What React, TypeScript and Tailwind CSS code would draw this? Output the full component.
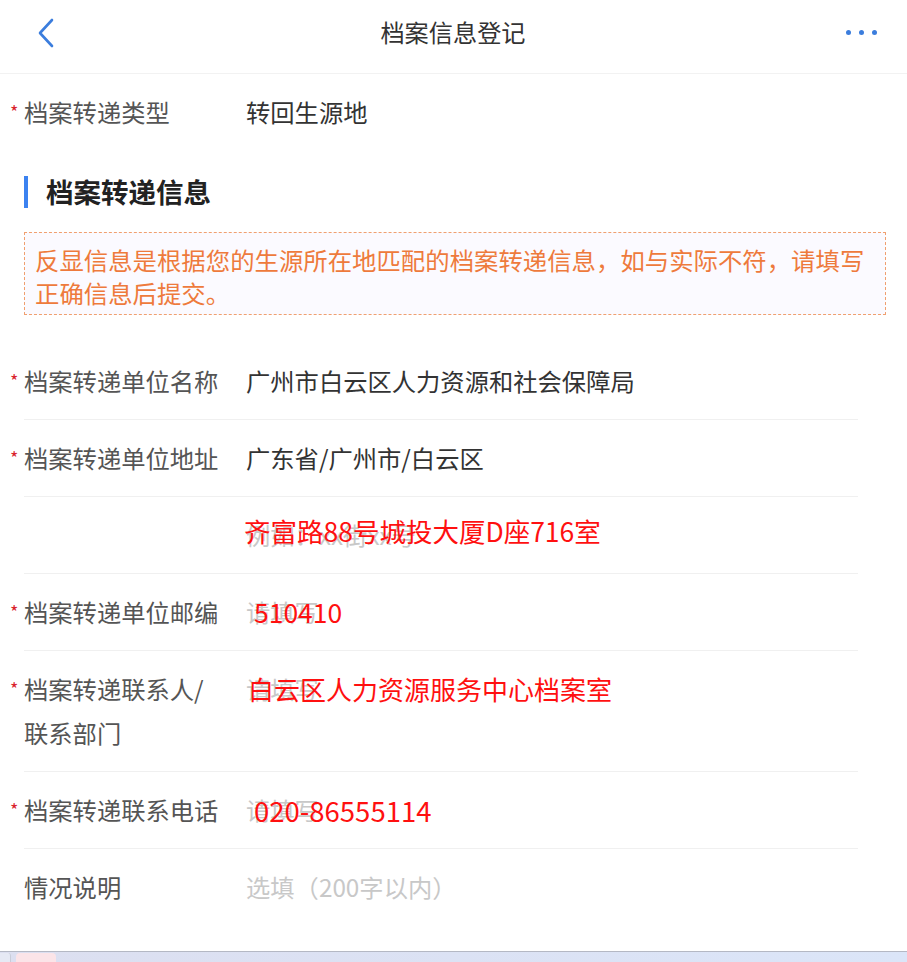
import React from "react";

const font = { fontFamily: '"Noto Sans CJK SC", "Noto Sans", sans-serif' };

type RowProps = {
  label: React.ReactNode;
  required?: boolean;
  value?: React.ReactNode;
  placeholder?: string;
  red?: string;
  redOffset?: string;
  border?: boolean;
  redSize?: string;
};

function Row({ label, required, value, placeholder, red, redOffset = "ml-0", border = true, redSize = "text-[26.5px]" }: RowProps) {
  return (
    <div className={`mx-[24px] w-[834px] py-[16px] ${border ? "border-b border-[#f0f0f0]" : ""}`}>
      <div className="flex -ml-[14px]">
        <div className="w-[14px] shrink-0 pt-[6px] text-[18px] leading-[30px] text-[#d9232d]">{required ? "*" : ""}</div>
        <div className="w-[222px] shrink-0 text-[24.3px] leading-[44px] text-[#555555]">{label}</div>
        <div className="relative flex-1 text-[24.3px] leading-[44px]">
          {value !== undefined && <span className="text-[#333333]">{value}</span>}
          {placeholder && <span className="text-[#c8c8c8]">{placeholder}</span>}
          {red && (
            <span className={`absolute left-0 top-0 ${redOffset} ${redSize} leading-[44px] text-[#ff1010] whitespace-nowrap`}>{red}</span>
          )}
        </div>
      </div>
    </div>
  );
}

export default function App() {
  return (
    <div className="flex h-[962px] w-[907px] flex-col bg-white" style={font}>
      {/* Header */}
      <div className="flex h-[74px] shrink-0 items-center justify-between border-b border-[#f2f2f2] px-[30px] pb-[8px]">
        <svg width="26" height="34" viewBox="0 0 26 34" className="ml-[4px]">
          <path d="M18 4 L6 17 L18 30" fill="none" stroke="#3b7ddd" strokeWidth="2.6" strokeLinecap="round" strokeLinejoin="round" />
        </svg>
        <div className="text-[24.2px] text-[#333333]">档案信息登记</div>
        <div className="flex items-center gap-[8px]">
          <span className="h-[5px] w-[5px] rounded-full bg-[#3b7ddd]" />
          <span className="h-[5px] w-[5px] rounded-full bg-[#3b7ddd]" />
          <span className="h-[5px] w-[5px] rounded-full bg-[#3b7ddd]" />
        </div>
      </div>

      <div className="flex-1">
        <Row label="档案转递类型" required value="转回生源地" border={false} />

        {/* Section heading */}
        <div className="mt-[25px] ml-[24px] flex h-[34px] items-center">
          <div className="h-[32px] w-[4px] bg-[#3c82f0]" />
          <div className="ml-[18px] text-[27.5px] font-bold text-[#222222]">档案转递信息</div>
        </div>

        {/* Notice */}
        <div className="mx-[24px] mt-[23px] w-[862px] border border-dashed border-[#f0a070] bg-[#fbfaff] pl-[10px] pr-[10px] pt-[10px] pb-[5px] text-[24.4px] leading-[33px] text-[#ee7a3c]">
          反显信息是根据您的生源所在地匹配的档案转递信息，如与实际不符，请填写正确信息后提交。
        </div>

        <div className="mt-[28px]">
          <Row label="档案转递单位名称" required value="广州市白云区人力资源和社会保障局" />
          <Row label="档案转递单位地址" required value="广东省/广州市/白云区" />
          <Row label="" placeholder="例如：xx街xx号" red="齐富路88号城投大厦D座716室" redOffset="-ml-[2px] -mt-[4px]" />
          <Row label="档案转递单位邮编" required placeholder="请填写" red="510410" redOffset="ml-[8px]" />
          <Row
            label={
              <>
                档案转递联系人/
                <br />
                联系部门
              </>
            }
            required
            placeholder="请填写"
            red="白云区人力资源服务中心档案室"
            redOffset="ml-[2px]"
            redSize="text-[26px]"
          />
          <Row label="档案转递联系电话" required placeholder="请填写" red="020-86555114" redOffset="ml-[8px]" redSize="text-[27.5px]" />
          <Row label="情况说明" placeholder="选填（200字以内）" border={false} />
        </div>
      </div>

      {/* Bottom taskbar strip */}
      <div className="flex h-[11px] shrink-0 items-end gap-[5px] border-t border-[#b4b8c4] bg-gradient-to-r from-[#dcdff0] to-[#dbe5f8]">
        <div className="h-[9px] w-[11px] rounded-tr-[3px] border-r border-[#c8ccd8] bg-[#e6e9f4]" />
        <div className="h-[9px] w-[40px] rounded-t-[4px] bg-[#fbe4e8]" />
      </div>
    </div>
  );
}
